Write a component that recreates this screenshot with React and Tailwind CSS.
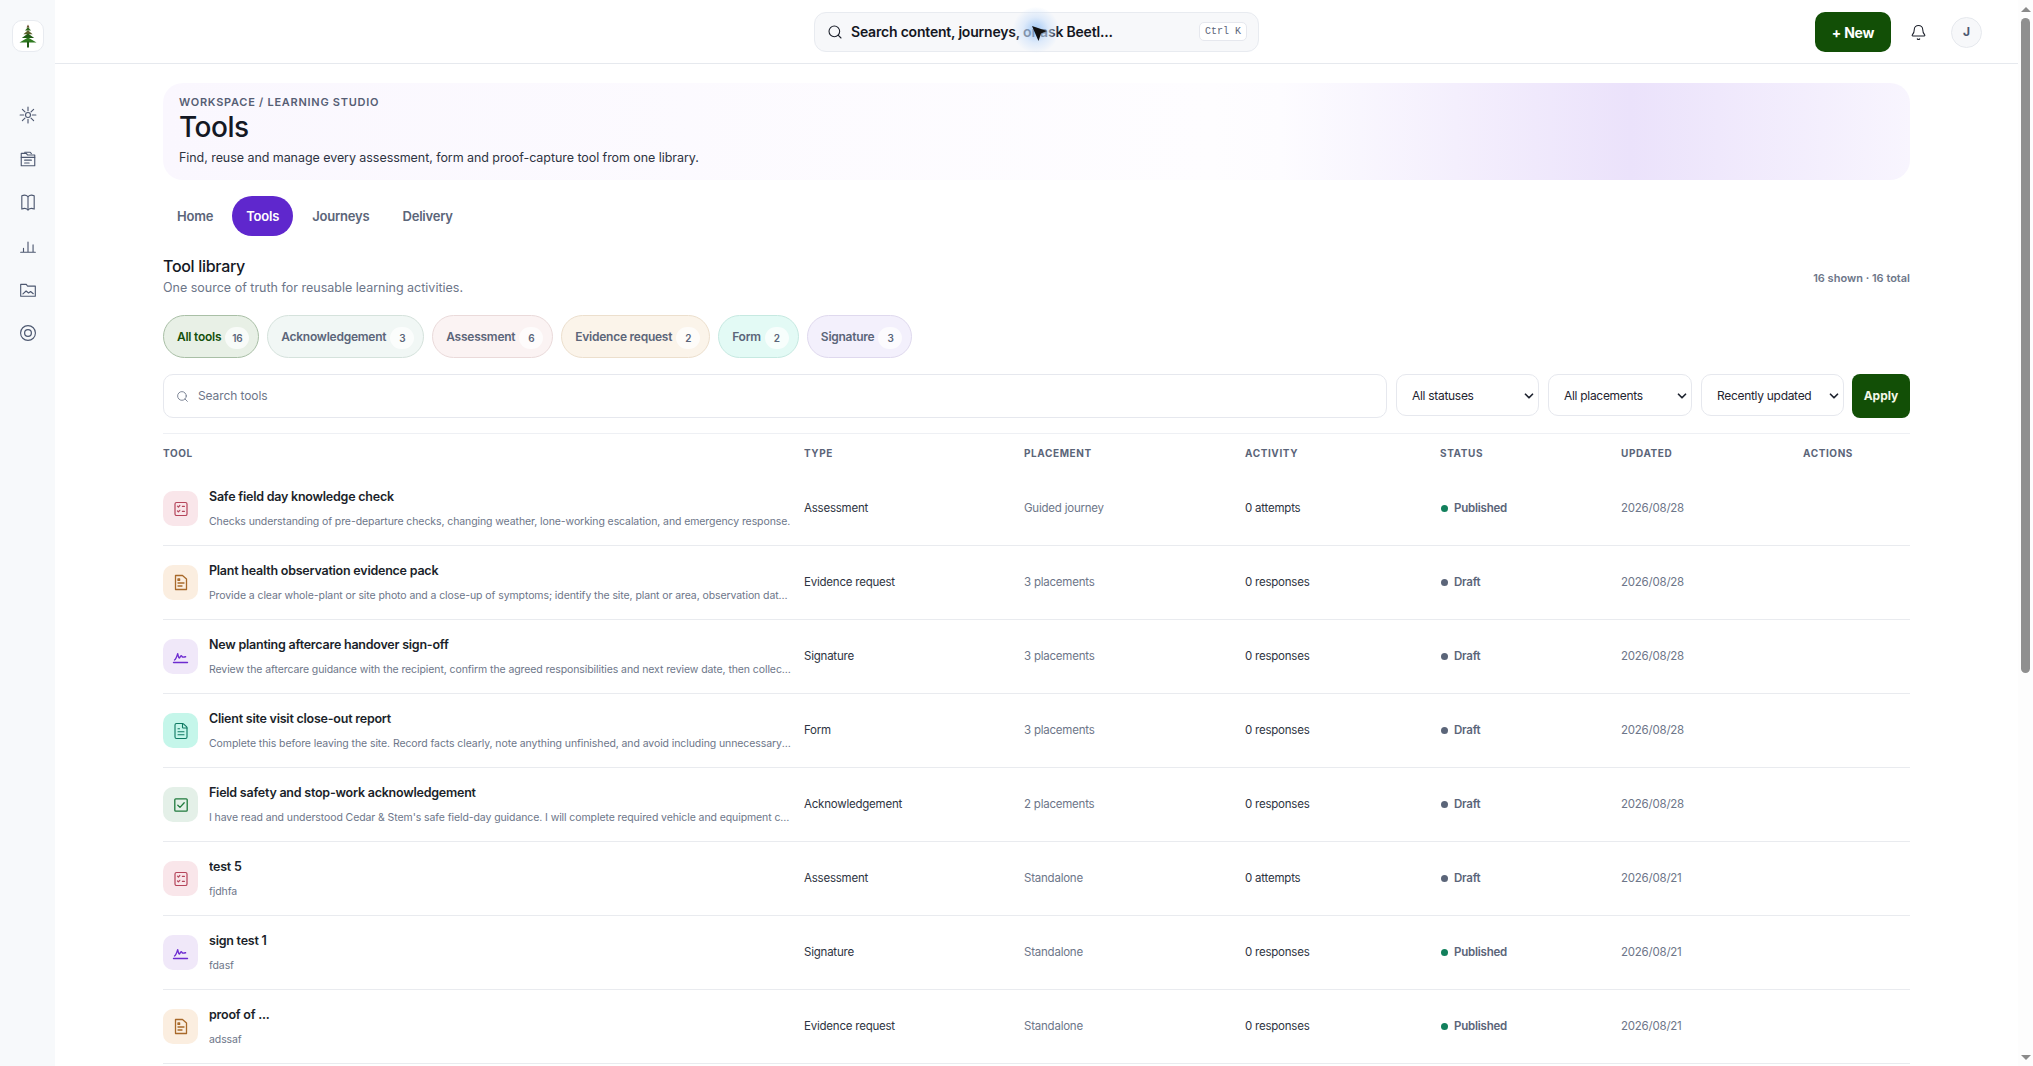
import { Search, Bell, ChevronDown, FileText } from "lucide-react";

const tabs = ["Home", "Tools", "Journeys", "Delivery"];

const filters = [
  { label: "All tools", count: 16, cls: "bg-[#e8f0e6] border-[#a9bfa6] text-[#14500c]" },
  { label: "Acknowledgement", count: 3, cls: "bg-[#f1f7f5] border-[#d5e2dc] text-[#5b6579]" },
  { label: "Assessment", count: 6, cls: "bg-[#fbf3f3] border-[#eadada] text-[#5b6579]" },
  { label: "Evidence request", count: 2, cls: "bg-[#fbf4ea] border-[#ecdfcd] text-[#5b6579]" },
  { label: "Form", count: 2, cls: "bg-[#e3faf5] border-[#c6e9e1] text-[#5b6579]" },
  { label: "Signature", count: 3, cls: "bg-[#f3f0fc] border-[#dfd9ee] text-[#5b6579]" },
];

const rows = [
  { name: "Safe field day knowledge check", desc: "Checks understanding of pre-departure checks, changing weather, lone-working escalation, and emergency response.", type: "Assessment", place: "Guided journey", act: "0 attempts", status: "Published", date: "2026/08/28" },
  { name: "Plant health observation evidence pack", desc: "Provide a clear whole-plant or site photo and a close-up of symptoms; identify the site, plant or area, observation date and anything else relevant.", type: "Evidence request", place: "3 placements", act: "0 responses", status: "Draft", date: "2026/08/28" },
  { name: "New planting aftercare handover sign-off", desc: "Review the aftercare guidance with the recipient, confirm the agreed responsibilities and next review date, then collect their signature.", type: "Signature", place: "3 placements", act: "0 responses", status: "Draft", date: "2026/08/28" },
  { name: "Client site visit close-out report", desc: "Complete this before leaving the site. Record facts clearly, note anything unfinished, and avoid including unnecessary personal details.", type: "Form", place: "3 placements", act: "0 responses", status: "Draft", date: "2026/08/28" },
  { name: "Field safety and stop-work acknowledgement", desc: "I have read and understood Cedar & Stem's safe field-day guidance. I will complete required vehicle and equipment checks before leaving.", type: "Acknowledgement", place: "2 placements", act: "0 responses", status: "Draft", date: "2026/08/28" },
  { name: "test 5", desc: "fjdhfa", type: "Assessment", place: "Standalone", act: "0 attempts", status: "Draft", date: "2026/08/21" },
  { name: "sign test 1", desc: "fdasf", type: "Signature", place: "Standalone", act: "0 responses", status: "Published", date: "2026/08/21" },
  { name: "proof of ...", desc: "adssaf", type: "Evidence request", place: "Standalone", act: "0 responses", status: "Published", date: "2026/08/21" },
];

const gridCols = "grid grid-cols-[641px_220px_221px_195px_181px_182px_107px]";

function NavIcon({ children }) {
  return (
    <svg width="18" height="18" viewBox="0 0 16 16" fill="none" stroke="currentColor" strokeWidth="1" strokeLinecap="round" strokeLinejoin="round">
      {children}
    </svg>
  );
}

function SidebarIcons() {
  return (
    <div className="flex flex-col items-center gap-[25.7px] mt-[54px] text-[#4d5870]">
      <NavIcon>
        <circle cx="8" cy="8" r="2.2" />
        <path d="M8 1v3.2M8 11.8V15M1 8h3.2M11.8 8H15M3 3l2.3 2.3M10.7 10.7L13 13M13 3l-2.3 2.3M5.3 10.7L3 13" />
      </NavIcon>
      <NavIcon>
        <path d="M2 14V3h4.5l1 1.4H14V14z" />
        <path d="M5 2h5l1 1.2M2 6.5h12M5 9h6M5 11.5h4" />
      </NavIcon>
      <NavIcon>
        <path d="M2.5 2.5C4.5 1.6 6.5 1.8 8 3.2c1.5-1.4 3.5-1.6 5.5-.7v11.8c-2-.9-4-.7-5.5.7-1.5-1.4-3.5-1.6-5.5-.7z" />
        <path d="M8 3.2v11.8" />
      </NavIcon>
      <NavIcon>
        <path d="M1.5 13.5h13M4 13.5V10M8 13.5V4.5M12.5 13.5V7" />
      </NavIcon>
      <NavIcon>
        <path d="M1.5 13.5V3h5l1 1.5h7v9z" />
        <path d="M3.5 11.5l2.8-2.6 2.2 1.8 1.8-1.4 2.4 2" />
      </NavIcon>
      <NavIcon>
        <circle cx="8" cy="8" r="6.6" />
        <circle cx="8" cy="8" r="3" strokeWidth="1.1" />
      </NavIcon>
    </div>
  );
}

function TreeLogo() {
  return (
    <svg width="18" height="24" viewBox="0 0 18 24">
      <path d="M9 0.5l1.5 3h-3z" fill="#6b4a2a" />
      <path d="M9 3l3 3.6H6z" fill="#2f6b1f" />
      <path d="M9 6.2l4.6 4H4.4z" fill="#5a5f2a" />
      <path d="M9 9.6l6.2 4.4H2.8z" fill="#1f5a14" />
      <path d="M9 13.4l8.5 5H0.5z" fill="#2f7a20" />
      <rect x="8" y="17.5" width="2" height="6" fill="#1f5a14" />
    </svg>
  );
}

function ChecklistIcon() {
  return (
    <svg width="16" height="16" viewBox="0 0 16 16" fill="none" stroke="#b5455a" strokeWidth="1.2" strokeLinecap="round" strokeLinejoin="round">
      <rect x="2" y="1.5" width="12" height="13" rx="1.6" />
      <path d="M4.5 5.2l.9.9 1.4-1.6M9.4 5.4h2M4.5 10l.9.9 1.4-1.6M9.4 10.4h2" />
    </svg>
  );
}

function EvidenceIcon() {
  return (
    <svg width="16" height="17" viewBox="0 0 16 17" fill="none" stroke="#a8692a" strokeWidth="1.3" strokeLinecap="round" strokeLinejoin="round">
      <path d="M2.5 1.5h7L13.5 5v10.5h-11z" />
      <path d="M5 4.8h1.6v1.6H5zM5 9h6M5 12h4" />
    </svg>
  );
}

function SignIcon() {
  return (
    <svg width="17" height="16" viewBox="0 0 17 16" fill="none" stroke="#6d2bd0" strokeWidth="1.4" strokeLinecap="round" strokeLinejoin="round">
      <path d="M2.5 11c1.4-.8 2.4-3.6 3.2-6.4.5 2 .7 4.4 1.5 4.4.8 0 1.1-2.4 2-2.4.6 0 .8 1.2 1.4 1.4.6.2 1.8 0 3-.2" />
      <path d="M1.5 13.5h14" />
    </svg>
  );
}

function AckIcon() {
  return (
    <svg width="16" height="16" viewBox="0 0 16 16" fill="none" stroke="#1f7a3d" strokeWidth="1.3" strokeLinecap="round" strokeLinejoin="round">
      <rect x="1.8" y="1.8" width="12.4" height="12.4" rx="1" />
      <path d="M4.8 8.2l2.2 2.2 4.2-4.6" />
    </svg>
  );
}

function TypeIcon({ type }) {
  if (type === "Assessment") {
    return <div className="w-[35px] h-[35px] rounded-[10px] bg-[#f9e6ea] flex items-center justify-center shrink-0"><ChecklistIcon /></div>;
  }
  if (type === "Evidence request") {
    return <div className="w-[35px] h-[35px] rounded-[10px] bg-[#fbeee0] flex items-center justify-center shrink-0"><EvidenceIcon /></div>;
  }
  if (type === "Signature") {
    return <div className="w-[35px] h-[35px] rounded-[10px] bg-[#f0e8f9] flex items-center justify-center shrink-0"><SignIcon /></div>;
  }
  if (type === "Form") {
    return <div className="w-[35px] h-[35px] rounded-[10px] bg-[#c5f6ea] flex items-center justify-center shrink-0"><FileText size={18} strokeWidth={1.5} className="text-[#0f7a63]" /></div>;
  }
  return <div className="w-[35px] h-[35px] rounded-[10px] bg-[#e4f0e8] flex items-center justify-center shrink-0"><AckIcon /></div>;
}

function Select({ label, width }) {
  return (
    <div className={`${width} h-[42px] rounded-[10px] border border-[#e6e8ee] bg-white pl-[15px] pr-[2px] pt-[1px] flex items-center justify-between text-[12px] tracking-[-0.3px] text-[#1f2430] whitespace-nowrap`}>
      <span>{label}</span>
      <ChevronDown size={14} strokeWidth={3} className="text-[#1f2430] shrink-0" />
    </div>
  );
}

export default function App() {
  return (
    <div className="h-screen overflow-hidden flex bg-white font-['Inter',sans-serif] text-[#1b1f2a]">
      {/* Sidebar */}
      <aside className="w-[55px] shrink-0 bg-[#f7f9fb] flex flex-col items-center pt-[20px]">
        <div className="w-[32px] h-[32px] rounded-[10px] bg-white border border-[#e8ebf0] flex items-center justify-center">
          <TreeLogo />
        </div>
        <SidebarIcons />
      </aside>

      <div className="flex-1 min-w-0 flex flex-col">
        {/* Top bar */}
        <header className="h-[64px] shrink-0 border-b border-[#e6e9ee] relative flex items-center justify-center">
          <div className="w-[445px] h-[40px] rounded-[12px] border border-[#e8ebf0] bg-[#f7f8fa] flex items-center pl-[12px] pr-[11px] relative">
            <Search size={16} strokeWidth={1.6} className="text-[#1b1f2a]" />
            <span className="ml-[8px] text-[14px] tracking-[-0.2px] font-semibold text-[#14171f]">Search content, journeys, or ask Beetl...</span>
            <span className="ml-auto h-[19px] px-[5px] rounded-[5px] border border-[#e6e8ee] bg-white flex items-center font-['Liberation_Mono',monospace] text-[10px] text-[#5b6579]">Ctrl K</span>
            <div className="absolute left-[198px] top-[-6px] w-[46px] h-[46px] rounded-full bg-[radial-gradient(circle,#8dbdf5cc_0%,#cfe2fa99_40%,transparent_72%)]"></div>
            <svg className="absolute left-[216px] top-[12px]" width="18" height="18" viewBox="0 0 18 18">
              <path d="M1 1l15 5-6 2.5L7.5 16z" fill="#111" />
            </svg>
          </div>
          <div className="absolute right-[36px] top-0 h-[64px] flex items-center">
            <button className="w-[76px] h-[40px] rounded-[10px] bg-[#124f06] text-white text-[14px] tracking-[-0.2px] font-bold">+ New</button>
            <Bell size={17} strokeWidth={1.5} className="ml-[19px] text-[#1b1f2a]" />
            <div className="ml-[24px] w-[31px] h-[31px] rounded-full border border-[#e6e9ee] bg-[#f7f8fa] flex items-center justify-center text-[12px] font-bold text-[#4d5870]">J</div>
          </div>
        </header>

        {/* Page */}
        <main className="flex-1 min-h-0 overflow-hidden px-[108px] pt-[19px]">
          <section className="h-[97px] rounded-[20px] bg-[linear-gradient(90deg,#faf7fe_0%,#fefdff_60%,#fdfcff_64%,#ebe2fb_84%,#f8f5fe_100%)] pl-[16px] pt-[12px]">
            <p className="text-[11px] leading-[15px] font-semibold tracking-[0.73px] text-[#565e74]">WORKSPACE / LEARNING STUDIO</p>
            <h1 className="text-[28px] leading-[34px] font-medium tracking-[-0.5px] text-[#141824]">Tools</h1>
            <p className="mt-[5px] text-[12.5px] tracking-[-0.06px] leading-[18px] text-[#2e3442]">Find, reuse and manage every assessment, form and proof-capture tool from one library.</p>
          </section>

          <nav className="flex items-center gap-[5px] mt-[16px] text-[13px] tracking-[-0.2px] font-semibold text-[#5b6579]">
            {tabs.map((t) => (
              <span key={t} className={t === "Tools" ? "h-[40px] pt-[1px] px-[14px] rounded-full bg-[#5f27cd] text-white flex items-center" : "h-[40px] pt-[1px] px-[14px] flex items-center"}>{t}</span>
            ))}
          </nav>

          <div className="flex items-end justify-between mt-[19px]">
            <div>
              <h2 className="text-[16px] tracking-[-0.3px] leading-[22px] font-medium text-[#141824]">Tool library</h2>
              <p className="mt-[1px] text-[12.5px] leading-[20px] text-[#6d7689]">One source of truth for reusable learning activities.</p>
            </div>
            <p className="text-[11px] leading-[18px] mb-[11px] font-semibold text-[#6d7689]">16 shown · 16 total</p>
          </div>

          <div className="flex gap-[8px] mt-[17px]">
            {filters.map((f) => (
              <div key={f.label} className={`h-[43px] rounded-full border pl-[13px] pr-[9px] flex items-center gap-[4px] text-[12px] tracking-[-0.25px] font-semibold ${f.cls}`}>
                <span>{f.label}</span>
                <span className="min-w-[24px] h-[22px] mt-[3px] rounded-full bg-white/70 flex items-center justify-center text-[10px] text-[#5b6579]">{f.count}</span>
              </div>
            ))}
          </div>

          <div className="flex gap-[9px] mt-[16px]">
            <div className="flex-1 h-[44px] rounded-[10px] border border-[#e6e8ee] bg-white flex items-center pl-[12px]">
              <Search size={13} strokeWidth={1.6} className="text-[#6d7689]" />
              <span className="ml-[9px] text-[12px] tracking-[-0.1px] text-[#6d7689]">Search tools</span>
            </div>
            <Select label="All statuses" width="w-[143px]" />
            <Select label="All placements" width="w-[144px]" />
            <Select label="Recently updated" width="w-[143px]" />
            <button className="w-[58px] h-[44px] ml-[-1px] rounded-[8px] bg-[#124f06] text-[#f2f7e8] text-[12px] font-bold">Apply</button>
          </div>

          <div className="mt-[15px] border-t border-[#eef0f4]">
            <div className={`${gridCols} h-[38px] items-center text-[10px] font-bold tracking-[0.6px] text-[#5b6579]`}>
              <span>TOOL</span>
              <span>TYPE</span>
              <span>PLACEMENT</span>
              <span>ACTIVITY</span>
              <span>STATUS</span>
              <span>UPDATED</span>
              <span>ACTIONS</span>
            </div>
            {rows.map((r) => (
              <div key={r.name} className={`${gridCols} h-[74px] items-center border-b border-[#e9ebef] text-[11.5px] tracking-[-0.22px]`}>
                <div className="flex items-center gap-[11px] min-w-0 pr-[12px]">
                  <TypeIcon type={r.type} />
                  <div className="min-w-0">
                    <p className="text-[12.5px] tracking-[-0.23px] leading-[18px] font-semibold text-[#1b1f2a] truncate">{r.name}</p>
                    <p className="mt-[8px] text-[10.5px] tracking-[-0.09px] leading-[16px] text-[#6d7689] truncate">{r.desc}</p>
                  </div>
                </div>
                <span className="text-[#2e3442]">{r.type}</span>
                <span className="text-[#6d7689]">{r.place}</span>
                <span className="text-[#2e3442]">{r.act}</span>
                <span className="flex items-center gap-[6px] font-semibold text-[#5b6579]">
                  <span className={r.status === "Published" ? "w-[7px] h-[7px] ml-[1px] rounded-full bg-[#12805c]" : "w-[7px] h-[7px] ml-[1px] rounded-full bg-[#5b6579]"}></span>
                  {r.status}
                </span>
                <span className="text-[#6d7689]">{r.date}</span>
                <span></span>
              </div>
            ))}
          </div>
        </main>
      </div>

      {/* Window scrollbar */}
      <div className="w-[15px] shrink-0 bg-[#fdfdfd] flex flex-col items-center pt-[7px] pb-[6px]">
        <div className="w-0 h-0 border-l-[5px] border-r-[5px] border-b-[5px] border-l-transparent border-r-transparent border-b-[#8a8a8a]"></div>
        <div className="w-[9px] h-[655px] mt-[6px] rounded-full bg-[#8f8f8f]"></div>
        <div className="mt-auto w-0 h-0 border-l-[5px] border-r-[5px] border-t-[5px] border-l-transparent border-r-transparent border-t-[#8a8a8a]"></div>
      </div>
    </div>
  );
}
